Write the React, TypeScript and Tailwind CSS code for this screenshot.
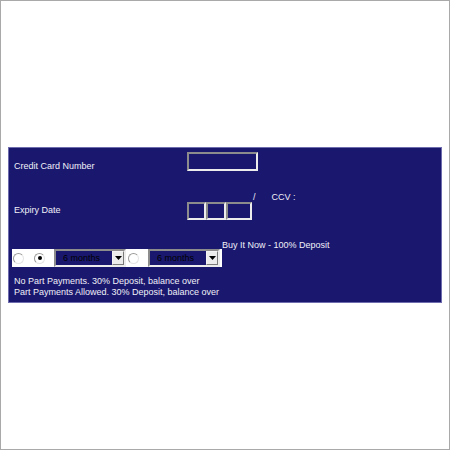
const FONT = "font-['Liberation_Sans',Arial,sans-serif]";
const INSET =
  "border-2 border-t-[#8c8c8c] border-l-[#8c8c8c] border-b-[#ececec] border-r-[#ececec]";

function Radio({ checked = false }: { checked?: boolean }) {
  return (
    <span className="flex h-[11px] w-[11px] shrink-0 items-center justify-center rounded-full border border-t-[#9a9a9a] border-l-[#9a9a9a] border-b-[#e4e4e4] border-r-[#e4e4e4] bg-white">
      {checked && <span className="h-[4px] w-[4px] rounded-full bg-black" />}
    </span>
  );
}

function Select() {
  return (
    <div className={`flex h-[18px] w-[72px] shrink-0 items-stretch bg-[#1a186e] ${INSET}`}>
      <span className="flex-1 pl-[7px] text-[9px] leading-[14px] text-black">6 months</span>
      <span className="flex w-[12px] items-center justify-center border border-t-[#f4f4f4] border-l-[#f4f4f4] border-b-[#7a7a7a] border-r-[#7a7a7a] bg-[#ececec]">
        <svg width="7" height="4" viewBox="0 0 7 4">
          <path d="M0 0h7L3.5 4z" fill="#000" />
        </svg>
      </span>
    </div>
  );
}

export default function App() {
  return (
    <div className={`h-[450px] w-[450px] border border-[#a9a9a9] bg-white ${FONT}`}>
      <div className="ml-[7px] mt-[146px] h-[156px] w-[434px] border border-[#6e6cae] bg-[#1a186e] pl-[5px] text-[9px] leading-[11px] text-[#f0f0f8]">
        <div className="flex items-start pt-[4px]">
          <span className="mt-[9px] w-[173px]">Credit Card Number</span>
          <div className={`h-[19px] w-[71px] ${INSET}`} />
        </div>

        <div className="mt-[20px] flex items-start">
          <span className="mt-[13px] w-[173px]">Expiry Date</span>
          <div className="mt-[10px] flex">
            <div className={`h-[18px] w-[19px] ${INSET}`} />
            <div className={`h-[18px] w-[20px] ${INSET}`} />
            <div className={`h-[18px] w-[26px] ${INSET}`} />
          </div>
          <span className="ml-[1px]">/</span>
          <span className="ml-[16px]">CCV :</span>
        </div>

        <div className="-ml-[2px] mt-[20px] flex items-start">
          <div className="mt-[9px] flex h-[18px] w-[210px] shrink-0 items-center bg-white">
            <span className="ml-[1px]"><Radio /></span>
            <span className="ml-[10px]"><Radio checked /></span>
            <span className="ml-[9px]"><Select /></span>
            <span className="ml-[2px]"><Radio /></span>
            <span className="ml-[9px]"><Select /></span>
          </div>
          <span>Buy It Now - 100% Deposit</span>
        </div>

        <div className="mt-[9px]">
          <p>No Part Payments. 30% Deposit, balance over</p>
          <p>Part Payments Allowed. 30% Deposit, balance over</p>
        </div>
      </div>
    </div>
  );
}
